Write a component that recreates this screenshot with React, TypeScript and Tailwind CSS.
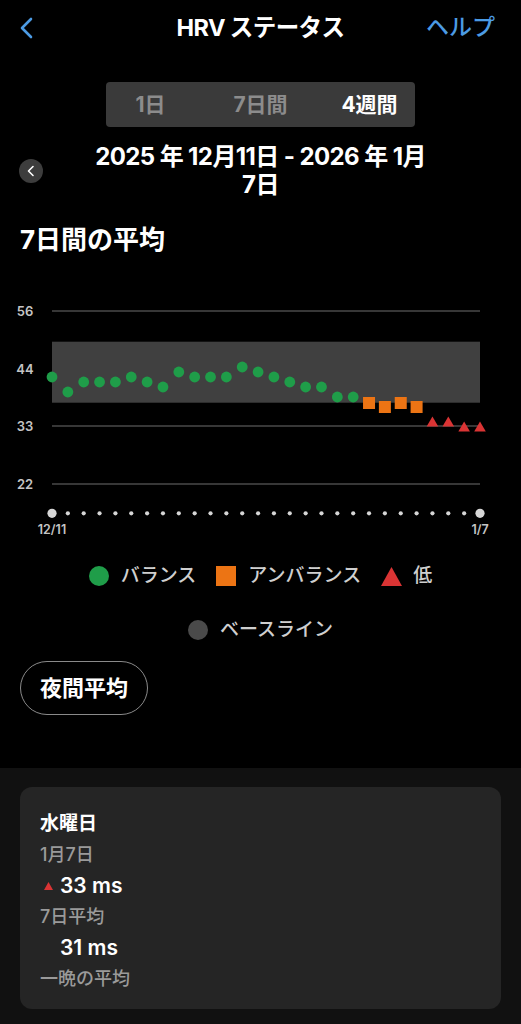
import React from 'react';

const X0 = 52;
const STEP = (480 - 52) / 27;

// y positions in page px (chart svg starts at 290)
const values = [
  377, 392, 382, 382, 382, 377, 382, 387, 372, 377, 377, 377, 367, 372, 377,
  382, 387, 387, 397, 397, 403, 407, 403, 407, 422, 422, 427, 427,
];

function kind(i: number): 'balanced' | 'unbalanced' | 'low' {
  if (i < 20) return 'balanced';
  if (i < 24) return 'unbalanced';
  return 'low';
}

function Chart() {
  const top = 290;
  return (
    <svg width="521" height="255" viewBox="0 0 521 255" className="block">
      {/* grid */}
      {[21, 136, 194].map((y) => (
        <line key={y} x1={52} x2={480} y1={y} y2={y} stroke="#4a4a4a" strokeWidth={1.5} />
      ))}
      {/* baseline band */}
      <rect x={52} y={51.7} width={428} height={61} fill="#404040" />
      {/* y labels */}
      {[
        ['56', 21],
        ['44', 79],
        ['33', 136],
        ['22', 194],
      ].map(([t, y]) => (
        <text
          key={t}
          x={25}
          y={Number(y) + 4.5}
          textAnchor="middle"
          fill="#c4c4c4"
          fontSize="13"
          fontWeight="600"
          fontFamily="Inter, 'Noto Sans CJK JP', sans-serif"
        >
          {t}
        </text>
      ))}
      {/* points */}
      {values.map((v, i) => {
        const x = X0 + i * STEP;
        const y = v - top;
        const k = kind(i);
        if (k === 'balanced') return <circle key={i} cx={x} cy={y} r={5.4} fill="#1f9d49" />;
        if (k === 'unbalanced')
          return <rect key={i} x={x - 6} y={y - 6} width={12} height={12} fill="#ec7414" />;
        return (
          <polygon
            key={i}
            points={`${x},${y - 5.5} ${x + 5.8},${y + 4.5} ${x - 5.8},${y + 4.5}`}
            fill="#da3434"
          />
        );
      })}
      {/* x axis dots */}
      {values.map((_, i) => {
        const x = X0 + i * STEP;
        const end = i === 0 || i === values.length - 1;
        return <circle key={i} cx={x} cy={223.3} r={end ? 4.6 : 2.1} fill="#d6d6d6" />;
      })}
      <text
        x={52}
        y={244}
        textAnchor="middle"
        fill="#c4c4c4"
        fontSize="12.5"
        fontWeight="600"
        fontFamily="Inter, 'Noto Sans CJK JP', sans-serif"
      >
        12/11
      </text>
      <text
        x={480}
        y={244}
        textAnchor="middle"
        fill="#c4c4c4"
        fontSize="12.5"
        fontWeight="600"
        fontFamily="Inter, 'Noto Sans CJK JP', sans-serif"
      >
        1/7
      </text>
    </svg>
  );
}

export default function App() {
  return (
    <div className="flex min-h-[1024px] w-[521px] flex-col bg-black font-[Inter,'Noto_Sans_CJK_JP',sans-serif] text-white">
      {/* Header */}
      <header className="grid h-[55px] grid-cols-[110px_1fr_110px] items-center">
        <div className="pl-[19px]">
          <svg width="16" height="22" viewBox="0 0 16 22">
            <path d="M12 2 L3 11 L12 20" fill="none" stroke="#4c9be4" strokeWidth="2.6" strokeLinecap="round" strokeLinejoin="round" />
          </svg>
        </div>
        <h1 className="whitespace-nowrap text-center text-[23.5px] font-bold tracking-tight">HRV ステータス</h1>
        <div className="whitespace-nowrap pr-[26px] text-right text-[23px] font-medium text-[#4c9be4]">ヘルプ</div>
      </header>

      {/* Range segment */}
      <div className="mt-[27px] flex justify-center">
        <div className="grid h-[45px] w-[309px] grid-cols-3 items-center rounded-[4px] bg-[#3a3a3a] text-[21px] font-bold">
          <span className="pr-[14px] text-center text-[#8c8c8c]">1日</span>
          <span className="text-center text-[#8c8c8c]">7日間</span>
          <span className="pl-[12px] text-center text-white">4週間</span>
        </div>
      </div>

      {/* Date range */}
      <div className="mt-[16px] grid grid-cols-[60px_1fr_60px] items-center">
        <div className="pl-[19px]">
          <div className="flex h-[24px] w-[24px] items-center justify-center rounded-full bg-[#3d3d3d]">
            <svg width="10" height="12" viewBox="0 0 10 12">
              <path d="M7 1.5 L2.5 6 L7 10.5" fill="none" stroke="#fff" strokeWidth="1.6" strokeLinecap="round" strokeLinejoin="round" />
            </svg>
          </div>
        </div>
        <p className="whitespace-nowrap text-center text-[24px] font-bold leading-[28px] tracking-tight">
          2025 年 12月11日 - 2026 年 1月
          <br />
          7日
        </p>
        <div />
      </div>

      <h2 className="mt-[26px] pl-[20px] text-[26px] font-bold leading-[30px]">7日間の平均</h2>

      {/* Chart */}
      <div className="mt-[35px]">
        <Chart />
      </div>

      {/* Legend */}
      <div className="mt-[20px] flex h-[22px] items-center justify-center gap-[20px] text-[19px] font-medium text-[#cfcfcf]">
        <div className="flex items-center gap-[12px]">
          <span className="h-[20px] w-[20px] rounded-full bg-[#1f9d49]" />
          <span>バランス</span>
        </div>
        <div className="flex items-center gap-[12px]">
          <span className="h-[20px] w-[20px] bg-[#ec7414]" />
          <span>アンバランス</span>
        </div>
        <div className="flex items-center gap-[11px]">
          <svg width="21" height="19" viewBox="0 0 21 19">
            <polygon points="10.5,0 21,19 0,19" fill="#da3434" />
          </svg>
          <span>低</span>
        </div>
      </div>
      <div className="mt-[32px] flex h-[22px] items-center justify-center gap-[12px] text-[19px] font-medium text-[#cfcfcf]">
        <span className="h-[20px] w-[20px] rounded-full bg-[#4a4a4a]" />
        <span>ベースライン</span>
      </div>

      {/* Night average button */}
      <div className="mt-[20px] pl-[20px]">
        <button className="flex h-[54px] w-[128px] items-center justify-center rounded-full border border-[#8a8a8a] text-[22px] font-bold text-white">
          夜間平均
        </button>
      </div>

      {/* Detail card */}
      <section className="mt-[53px] flex-1 bg-[#111111] px-[20px] pb-[16px] pt-[19px]">
        <div className="rounded-[12px] bg-[#252525] px-[20px] pb-[15px] pt-[21px] leading-[31px]">
          <p className="text-[19px] font-bold text-white">水曜日</p>
          <p className="text-[18px] font-medium text-[#9a9a9a]">1月7日</p>
          <p className="flex items-center text-[21px] font-semibold text-white">
            <svg width="20" height="12" viewBox="0 0 20 12">
              <polygon points="8.5,2 13,10 4,10" fill="#da3434" />
            </svg>
            33 ms
          </p>
          <p className="text-[18px] font-medium text-[#9a9a9a]">7日平均</p>
          <p className="pl-[20px] text-[21px] font-semibold text-white">31 ms</p>
          <p className="text-[18px] font-medium text-[#9a9a9a]">一晩の平均</p>
        </div>
      </section>
    </div>
  );
}
